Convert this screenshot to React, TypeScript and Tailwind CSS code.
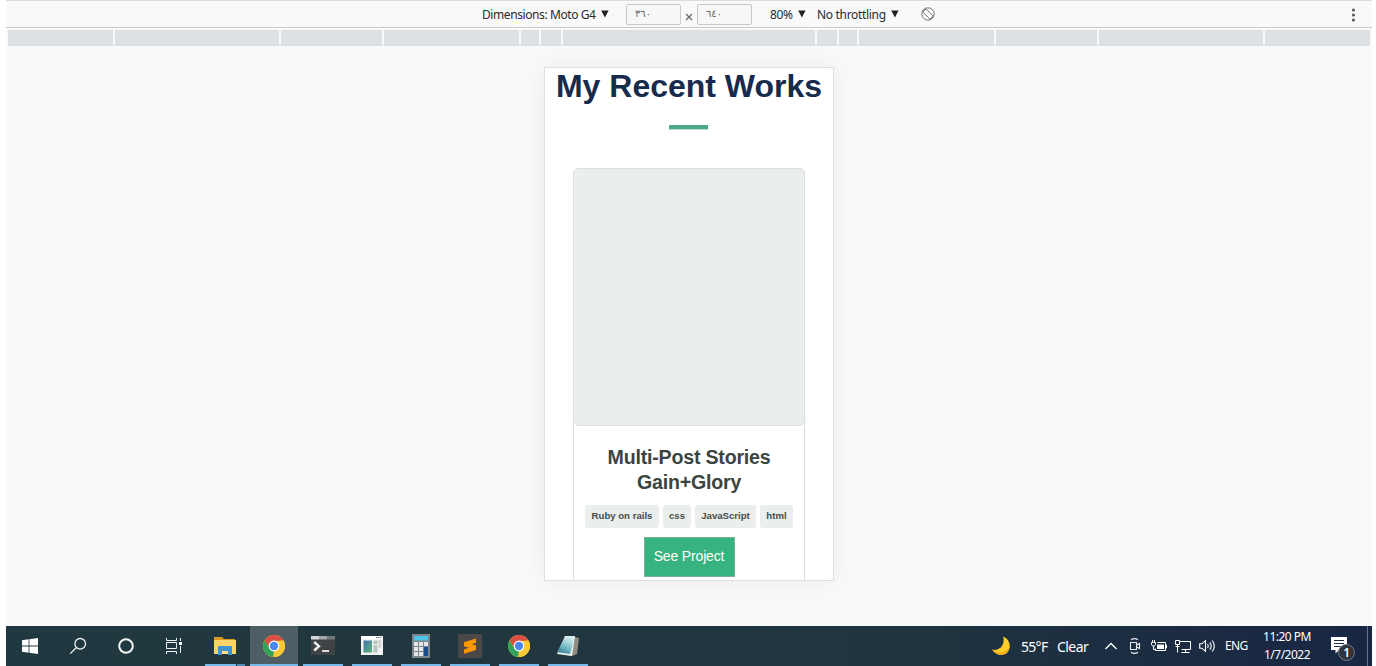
import type { ReactNode } from "react";

const segments = [105, 164, 101, 135, 18, 20, 252, 20, 18, 135, 101, 164, 105];

function Caret() {
  return (
    <svg width="8" height="8" viewBox="0 0 8 8" fill="#222">
      <path d="M0.2 0.4h7.4L3.9 7.6z" />
    </svg>
  );
}

function SizeField({ children }: { children: ReactNode }) {
  return (
    <div className="mt-px h-[21px] w-[55px] rounded-[2px] border border-[#c6c8ca] bg-[#f7f7f7] pl-[8px] font-['DejaVu_Sans',sans-serif] text-[10px] leading-[18px] tracking-[2.2px] text-[#666]">
      {children}
    </div>
  );
}

function DeviceToolbar() {
  return (
    <div className="flex h-[28px] items-center border-t border-b border-t-[#dcdcdc] border-b-[#c8cacc] bg-[#f9f9f9] font-['Noto_Sans','Open_Sans',sans-serif] text-[12px] whitespace-nowrap text-[#2a2a2a]">
      <div className="ml-[476px] flex w-[144px] items-center">
        <span className="w-[119px] pt-[2px] tracking-[-0.41px]">Dimensions: Moto G4</span>
        <Caret />
      </div>
      <SizeField>٣٦٠</SizeField>
      <svg className="mx-[4px] mt-[5px]" width="8" height="8" viewBox="0 0 8 8" stroke="#666" strokeWidth="1.2">
        <path d="M1 1l6 6M7 1l-6 6" />
      </svg>
      <SizeField>٦٤٠</SizeField>
      <div className="ml-[18px] flex w-[47px] items-center">
        <span className="w-[28px] pt-[2px] tracking-[-0.4px]">80%</span>
        <Caret />
      </div>
      <div className="flex w-[104px] items-center">
        <span className="w-[74px] pt-[2px] tracking-[-0.32px]">No throttling</span>
        <Caret />
      </div>
      <svg width="14" height="14" viewBox="0 0 14 14" fill="none" stroke="#777" strokeWidth="1">
        <circle cx="7" cy="7" r="6.2" />
        <path d="M1.8 5L5 1.8L12.2 9L9 12.2z" />
        <path d="M4.2 1.6L1.6 4.2M12.4 9.8L9.8 12.4" />
      </svg>
      <svg className="mt-px mr-[16px] ml-auto" width="4" height="14" viewBox="0 0 4 14" fill="#5f6368">
        <circle cx="1.5" cy="2" r="1.6" />
        <circle cx="1.5" cy="7" r="1.6" />
        <circle cx="1.5" cy="12" r="1.6" />
      </svg>
    </div>
  );
}

function Tag({ children, className }: { children: ReactNode; className: string }) {
  return <span className={`flex h-[23px] items-center justify-center rounded-[3px] bg-[#eaeeed] ${className}`}>{children}</span>;
}

function Phone() {
  return (
    <div className="mx-auto mt-[21px] flex h-[514px] w-[290px] flex-col items-center overflow-hidden border border-[#dedfe0] bg-white font-['Liberation_Sans',Arial,sans-serif] shadow-[0_0_24px_rgba(0,0,0,0.06)]">
      <h1 className="h-[36px] text-[32px] leading-[36px] font-bold whitespace-nowrap text-[#172b4d]">My Recent Works</h1>
      <div className="mt-[21px] mr-px h-[5px] w-[39px] border-b border-[#b5dfcc] bg-[#4da985]" />
      <div className="mt-[38px] flex w-[232px] flex-1 flex-col items-center rounded-t-[6px] border-x border-[#d9dcdc]">
        <div className="h-[258px] w-[232px] shrink-0 rounded-[6px] border border-[#dce0df] bg-[#eaeeed]" />
        <h2 className="mt-[19px] w-[200px] text-center text-[19.6px] leading-[25px] font-bold tracking-[-0.2px] text-[#3a4541]">Multi-Post Stories Gain+Glory</h2>
        <div className="mt-[10px] flex gap-[4px] text-[9.6px] font-bold text-[#454d4a]">
          <Tag className="w-[74px]">Ruby on rails</Tag>
          <Tag className="w-[28px]">css</Tag>
          <Tag className="w-[61px]">JavaScript</Tag>
          <Tag className="w-[33px]">html</Tag>
        </div>
        <div className="mt-[9px] h-[40px] w-[91px] shrink-0 border border-[#7fae99] bg-[#36b37e] text-center text-[14px] leading-[37px] tracking-[-0.15px] text-white">See Project</div>
      </div>
    </div>
  );
}

function Chrome() {
  return (
    <svg width="24" height="24" viewBox="0 0 24 24">
      <circle cx="12" cy="12" r="11" fill="#fbc934" />
      <path d="M2.5 6.5A11 11 0 0 1 21.5 6.5L12 7L7.7 14.5z" fill="#d94f43" />
      <path d="M2.5 6.5L7.7 14.5L12 17L11 23A11 11 0 0 1 2.5 6.5z" fill="#32a25a" />
      <path d="M21.5 6.5A11 11 0 0 1 11 23L16.3 14.5L17 7z" fill="#fbc934" />
      <circle cx="12" cy="12" r="5.4" fill="#fff" />
      <circle cx="12" cy="12" r="4.2" fill="#4b86ee" />
    </svg>
  );
}

function TaskButton({ children, active, split }: { children: ReactNode; active?: boolean; split?: boolean }) {
  return (
    <div className={`flex h-[40px] w-[48px] flex-col items-center ${active ? "bg-[#4e5e64]" : ""}`}>
      <div className="flex h-[38px] items-center pt-[2px]">{children}</div>
      <div className={`flex h-[2px] bg-[#76b9ed] ${active ? "w-[48px]" : "w-[40px]"}`}>
        {split && <div className="ml-auto h-[2px] w-[9px] border-l border-[#233a42] bg-[#4f8cb5]" />}
      </div>
    </div>
  );
}

function Cell({ children }: { children: ReactNode }) {
  return <div className="flex h-[40px] w-[48px] items-center justify-center">{children}</div>;
}

function Taskbar() {
  return (
    <div className="flex h-[40px] items-center bg-linear-to-r from-[#20383f] via-[#21363f] via-60% to-[#182643] font-['Noto_Sans','Open_Sans',sans-serif] whitespace-nowrap text-white">
      <Cell>
        <svg width="16" height="16" viewBox="0 0 16 16" fill="#fff">
          <path d="M0 2.2L6.6 1.3V7.5H0zM7.4 1.2L16 0V7.5H7.4zM0 8.4H6.6V14.7L0 13.8zM7.4 8.4H16V16L7.4 14.8z" />
        </svg>
      </Cell>
      <Cell>
        <svg width="18" height="18" viewBox="0 0 18 18" fill="none" stroke="#eef2f3" strokeWidth="1.3">
          <circle cx="11.2" cy="6.8" r="5.3" />
          <path d="M7.5 10.5L1.2 16.6" />
        </svg>
      </Cell>
      <Cell>
        <svg width="16" height="16" viewBox="0 0 16 16" fill="none" stroke="#f4f6f6" strokeWidth="2">
          <circle cx="8" cy="8" r="6.8" />
        </svg>
      </Cell>
      <Cell>
        <svg width="16" height="16" viewBox="0 0 16 16" fill="none" stroke="#eef2f3">
          <path d="M0.5 0V2.5H10.5V0M0.5 16V13.5H10.5V16M0.5 4.5H10.5V10.5H0.5zM14.5 0V3M14.5 8V15" />
          <path d="M13 4h3v3h-3z" fill="#fff" stroke="none" />
        </svg>
      </Cell>
      <div className="ml-[3px] flex gap-px">
        <TaskButton split>
          <svg width="22" height="20" viewBox="0 0 22 20">
            <path d="M0 1h8l2 2h11v14H0z" fill="#d69a1c" />
            <path d="M0 4h22v14H0z" fill="#fbd468" />
            <path d="M4 19V11q0-1 1-1h12q1 0 1 1v8h-4v-4H8v4z" fill="#3d94d2" />
            <path d="M8 15h6v3H8z" fill="#f8dc89" />
          </svg>
        </TaskButton>
        <TaskButton active><Chrome /></TaskButton>
        <TaskButton>
          <svg className="mb-[1px]" width="24" height="19" viewBox="0 0 24 19" fill="none">
            <path d="M0 0h24v19H0z" fill="#404345" />
            <path d="M0 0h8v3.5H0z" fill="#d5d7d8" />
            <path d="M8 0h8v3.5H8z" fill="#a4a8aa" />
            <path d="M16 0h8v3.5h-8z" fill="#74797b" />
            <path d="M3.2 6L8 10.2L3.2 14.5" stroke="#eee" strokeWidth="2.4" />
            <path d="M11 15h7" stroke="#eee" strokeWidth="1.8" />
          </svg>
        </TaskButton>
        <TaskButton>
          <svg width="22" height="20" viewBox="0 0 22 20">
            <defs>
              <linearGradient id="panel" x1="0" y1="0" x2="1" y2="1">
                <stop offset="0" stopColor="#4273a8" />
                <stop offset="1" stopColor="#5fb37a" />
              </linearGradient>
            </defs>
            <path d="M0 0h22v19H0z" fill="#f1f2f1" />
            <path d="M0 0h22v3H0z" fill="#fff" />
            <path d="M15 1h1.5v1H15zM17 1h1.5v1H17zM19 1h1.5v1H19z" fill="#777" />
            <path d="M2.5 4.5H11v12H2.5z" fill="url(#panel)" />
            <path d="M12.5 4.5h4v3.5h-4zM12.5 9h4v7.5h-4z" fill="#b9c3c1" />
            <path d="M17.5 5h2.5M17.5 7h2.5M17.5 9h2.5M17.5 11h2.5" stroke="#b3bcbb" />
          </svg>
        </TaskButton>
        <TaskButton>
          <svg width="18" height="24" viewBox="0 0 18 24">
            <path d="M0 0h18v24H0z" fill="#7c858a" />
            <path d="M2 2h14v4.5H2z" fill="#4ec5ea" />
            <path d="M2 8h4v4H2zM7 8h4v4H7zM12 8h4v4h-4zM2 13h4v4H2zM7 13h4v4H7zM2 18h4v4H2zM7 18h4v4H7z" fill="#e5e8ea" />
            <path d="M12 13h4v9h-4z" fill="#174b8c" />
          </svg>
        </TaskButton>
        <TaskButton>
          <svg width="24" height="24" viewBox="0 0 24 24">
            <path d="M1 0h22q1 0 1 1v22q0 1-1 1H1q-1 0-1-1V1q0-1 1-1z" fill="#4b4948" />
            <path d="M6 8.3L18 4.5V8.8L11 11L18 13.1V16L6 19.8V15.4L13 13.1L6 11.1z" fill="#ff9800" />
            <path d="M6 8.3V12.2L18 15.9V11.4L10.8 9z" fill="#ff9800" />
            <path d="M10.6 11.1L13.4 12L18 10.8V11.6L11.8 11.4z" fill="#da7b00" />
          </svg>
        </TaskButton>
        <TaskButton><Chrome /></TaskButton>
        <TaskButton>
          <svg width="24" height="24" viewBox="0 0 24 24">
            <defs>
              <linearGradient id="note" x1="0.7" y1="0" x2="0.2" y2="1">
                <stop offset="0" stopColor="#d7f1f2" />
                <stop offset="0.6" stopColor="#72b8c6" />
                <stop offset="1" stopColor="#337586" />
              </linearGradient>
            </defs>
            <path d="M19 3L23 4L21 20L16 22L10 21z" fill="#918c7e" />
            <path d="M9 2L19 2L16 22L1 20z" fill="#e9f0ef" />
            <path d="M9 3.5L19 2.5L14 20L1 18z" fill="url(#note)" />
            <path d="M9 3h10" stroke="#e1ecec" strokeWidth="2" strokeDasharray="1 1" />
          </svg>
        </TaskButton>
      </div>

      <div className="ml-[400px] flex flex-1 items-center">
        <svg width="18" height="20" viewBox="0 0 18 20">
          <path d="M11.2 0.6Q18 3.5 17.8 10.5Q16.8 18.6 9 19Q3 18.6 0.2 13.6Q5 14.8 8.8 11.6Q12.8 7.2 11.2 0.6z" fill="#ffcc2a" />
          <path d="M17.8 10.5Q16.8 18.6 9 19Q3 18.6 0.2 13.6Q6 18 11.5 15.6Q15.8 14 17.8 10.5z" fill="#f6b012" />
        </svg>
        <span className="ml-[11px] w-[36px] pt-[1px] text-[14px] tracking-[-0.7px]">55°F</span>
        <span className="w-[48px] pt-[1px] text-[14px] tracking-[-0.55px]">Clear</span>
        <svg width="12" height="8" viewBox="0 0 12 8" fill="none" stroke="#fff" strokeWidth="1.3">
          <path d="M0.5 7L6 1.5L11.5 7" />
        </svg>
        <svg className="ml-[12px]" width="12" height="16" viewBox="0 0 12 16" fill="none" stroke="#e8ebf0" strokeWidth="1.1">
          <path d="M2 1.8Q5.5-0.6 9 1.8M2 14.2Q5.5 16.6 9 14.2M1.5 4.5h6v7h-6zM7.7 7L10.5 5.5V10.5L7.7 9" />
        </svg>
        <svg className="ml-[10px]" width="16" height="12" viewBox="0 0 16 12" fill="none" stroke="#fff">
          <path d="M6.5 2.5h8v8h-10V8.5M14.5 5h1v3h-1M1.5 0v2M3.5 0v2M0.5 2.5h4v2L3.5 6H1.5L0.5 4.5zM2.5 6v3.5h2" />
          <path d="M6 4.5h7v4.5H6z" fill="#fff" stroke="none" />
        </svg>
        <svg className="ml-[8px]" width="17" height="15" viewBox="0 0 17 15" fill="none" stroke="#fff">
          <path d="M5 2.5h10.5v8h-9M10.5 10.5v3M6.5 13.5h8M0.5 1.5h4v4h-4zM2.5 5.5v8M0.5 7.5h4" />
        </svg>
        <svg className="ml-[7px]" width="17" height="14" viewBox="0 0 17 14" fill="none" stroke="#fff" strokeWidth="1.1">
          <path d="M0.7 4.8H3L6.5 1.7V12.3L3 9.2H0.7zM8.5 5q1.4 2 0 4M10.8 3.3q2.8 3.7 0 7.4M13.2 1.5q4.2 5.5 0 11" />
        </svg>
        <span className="ml-[9px] w-[31px] text-[12px] tracking-[-0.6px]">ENG</span>
        <div className="ml-[2px] w-[58px] text-center text-[12px] leading-[18px] tracking-[-0.5px]">
          <div>11:20 PM</div>
          <div>1/7/2022</div>
        </div>
        <svg className="mt-[6px] ml-[14px]" width="26" height="26" viewBox="0 0 26 26">
          <path d="M1 1h16v13H9l-3.5 3.5V14H1z" fill="#fff" />
          <path d="M4 4.5h10M4 7.5h10M4 10.5h7" stroke="#1a2a44" strokeWidth="1.2" />
          <circle cx="16.5" cy="16.5" r="8" fill="#303440" stroke="#737985" />
          <text x="13.2" y="21" fontSize="12" fontWeight="600" fill="#fff">1</text>
        </svg>
      </div>
      <div className="mr-[4px] h-[40px] w-px bg-[#66718a]" />
    </div>
  );
}

export default function App() {
  return (
    <div className="h-[666px] w-[1376px] overflow-hidden bg-white pr-[4px] pl-[6px]">
      <div className="flex h-[626px] flex-col bg-[#f9f9f9]">
        <DeviceToolbar />
        <div className="mx-[2px] mt-[2px] flex h-[16px] shrink-0 gap-[2px] border-b border-[#dde0e4]">
          {segments.map((w, i) => (
            <div key={i} className="h-[15px] bg-[#dde0e4]" style={{ flex: `${w} 0 0px` }} />
          ))}
        </div>
        <Phone />
      </div>
      <Taskbar />
    </div>
  );
}
